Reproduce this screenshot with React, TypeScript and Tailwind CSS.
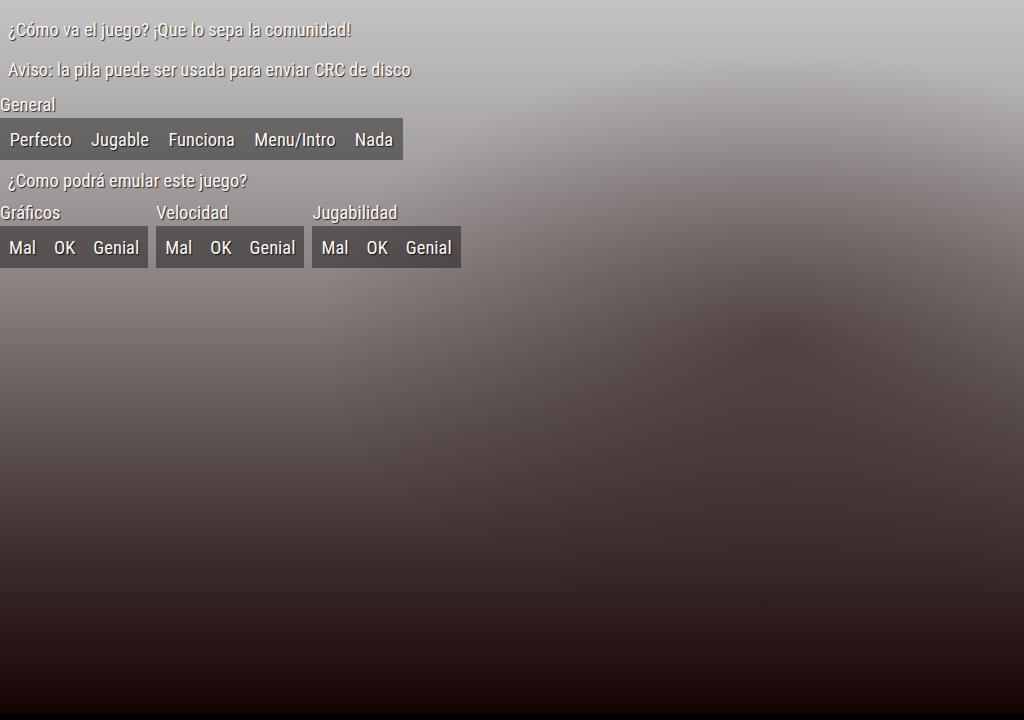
import React from "react";

const font = "font-['Roboto_Condensed','Liberation_Sans_Narrow',Roboto,sans-serif] [font-stretch:condensed]";
const shadow = "[text-shadow:1px_1px_1px_rgba(0,0,0,0.8)]";
const text = `text-[18.5px] text-[#f8f8f8] ${shadow}`;

function Bar({ items, wide }: { items: string[]; wide?: boolean }) {
  return (
    <div className="mt-[1px] flex h-[42px] items-center bg-black/40">
      {items.map((it) => (
        <button key={it} className={`${wide ? "px-[9.7px]" : "px-[9px]"} pt-[3px] ${text}`}>
          {it}
        </button>
      ))}
    </div>
  );
}

function Group({ label, items, wide }: { label: string; items: string[]; wide?: boolean }) {
  return (
    <div className="flex flex-col">
      <div className={`h-[24px] leading-[24px] ${text}`}>{label}</div>
      <Bar items={items} wide={wide} />
    </div>
  );
}

export default function App() {
  return (
    <div
      className={`relative h-[720px] w-[1024px] overflow-hidden ${font} bg-[radial-gradient(ellipse_45%_40%_at_76%_47%,rgba(30,12,12,0.45),transparent_100%),linear-gradient(to_bottom,#c4c4c4_0%,#aaa5a5_20%,#867c7c_42%,#5e5252_60%,#3c2c2c_78%,#231010_92%,#160303_99%,#000_99.3%)]`}
    >
      <div className="flex flex-col pt-[18px]">
        <p className={`h-[24px] pl-[8px] leading-[24px] ${text}`}>
          ¿Cómo va el juego? ¡Que lo sepa la comunidad!
        </p>
        <p className={`mt-[16px] h-[24px] pl-[8px] leading-[24px] ${text}`}>
          Aviso: la pila puede ser usada para enviar CRC de disco
        </p>
        <div className="mt-[11px] flex">
          <Group wide label="General" items={["Perfecto", "Jugable", "Funciona", "Menu/Intro", "Nada"]} />
        </div>
        <p className={`mt-[9px] h-[24px] pl-[8px] leading-[24px] ${text}`}>
          ¿Como podrá emular este juego?
        </p>
        <div className="mt-[8px] flex gap-[8px]">
          <Group label="Gráficos" items={["Mal", "OK", "Genial"]} />
          <Group label="Velocidad" items={["Mal", "OK", "Genial"]} />
          <Group label="Jugabilidad" items={["Mal", "OK", "Genial"]} />
        </div>
      </div>
    </div>
  );
}
